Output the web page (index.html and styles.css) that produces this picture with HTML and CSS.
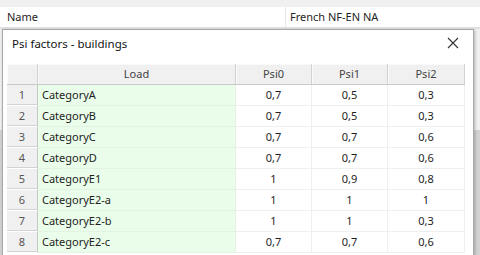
FILE: index.html
```html
<!DOCTYPE html>
<html lang="en">
<head>
    <meta charset="UTF-8">
    <title>Psi factors - buildings</title>
    <link rel="stylesheet" href="styles.css">
</head>
<body>
    <div class="props">
        <div class="props-top"></div>
        <div class="prop-row">
            <div class="prop-name">Name</div>
            <div class="prop-value">French NF-EN NA</div>
        </div>
        <div class="props-gap"></div>
        <div class="props-rest">
            <div class="props-block"></div>
        </div>
    </div>

    <div class="dialog">
        <div class="dialog-title">
            <span>Psi factors - buildings</span>
            <svg class="close-icon" width="12" height="12" viewBox="0 0 12 12">
                <path d="M1 1 L11 11 M11 1 L1 11" stroke="#333" stroke-width="1.1" fill="none"/>
            </svg>
        </div>

        <div class="dialog-body">
            <div class="grid">
                <div class="grid-row head">
                    <div class="cell corner"></div>
                    <div class="cell">Load</div>
                    <div class="cell">Psi0</div>
                    <div class="cell">Psi1</div>
                    <div class="cell">Psi2</div>
                </div>

                <div class="grid-row">
                    <div class="cell num">1</div>
                    <div class="cell load">CategoryA</div>
                    <div class="cell">0,7</div>
                    <div class="cell">0,5</div>
                    <div class="cell">0,3</div>
                </div>
                <div class="grid-row">
                    <div class="cell num">2</div>
                    <div class="cell load">CategoryB</div>
                    <div class="cell">0,7</div>
                    <div class="cell">0,5</div>
                    <div class="cell">0,3</div>
                </div>
                <div class="grid-row">
                    <div class="cell num">3</div>
                    <div class="cell load">CategoryC</div>
                    <div class="cell">0,7</div>
                    <div class="cell">0,7</div>
                    <div class="cell">0,6</div>
                </div>
                <div class="grid-row">
                    <div class="cell num">4</div>
                    <div class="cell load">CategoryD</div>
                    <div class="cell">0,7</div>
                    <div class="cell">0,7</div>
                    <div class="cell">0,6</div>
                </div>
                <div class="grid-row">
                    <div class="cell num">5</div>
                    <div class="cell load">CategoryE1</div>
                    <div class="cell">1</div>
                    <div class="cell">0,9</div>
                    <div class="cell">0,8</div>
                </div>
                <div class="grid-row">
                    <div class="cell num">6</div>
                    <div class="cell load">CategoryE2-a</div>
                    <div class="cell">1</div>
                    <div class="cell">1</div>
                    <div class="cell">1</div>
                </div>
                <div class="grid-row">
                    <div class="cell num">7</div>
                    <div class="cell load">CategoryE2-b</div>
                    <div class="cell">1</div>
                    <div class="cell">1</div>
                    <div class="cell">0,3</div>
                </div>
                <div class="grid-row">
                    <div class="cell num">8</div>
                    <div class="cell load">CategoryE2-c</div>
                    <div class="cell">0,7</div>
                    <div class="cell">0,7</div>
                    <div class="cell">0,6</div>
                </div>
            </div>
        </div>
    </div>
</body>
</html>
```

FILE: styles.css
```css
:root {
    --panel-bg: #f0f0f0;
    --grid-line: #efefef;
    --head-line: #d2d2d2;
    --load-bg: #eafdea;
    --text: #1e1e1e;
}

body {
    margin: 0;
    background-color: var(--panel-bg);
    font-family: "Noto Sans", "Open Sans", sans-serif;
    font-size: 11px;
    color: var(--text);
    height: 255px;
    overflow: hidden;
    position: relative;
}

/* property panel behind the dialog */
.props-top {
    height: 7px;
}

.prop-row {
    display: grid;
    grid-template-columns: 286px 1fr;
    height: 20px;
    line-height: 20px;
    background-color: #fff;
}

.prop-name {
    padding-left: 7px;
    border-right: 1px solid #e6e6e6;
}

.prop-value {
    padding-left: 4px;
}

.props-gap {
    height: 2px;
    background-color: #e2e2e2;
}

.props-rest {
    height: 226px;
    display: flex;
    flex-direction: column;
    justify-content: flex-end;
}

.props-block {
    height: 125px;
    background-color: #d3d3d3;
}

/* dialog */
.dialog {
    position: absolute;
    left: 2px;
    top: 29px;
    width: 472px;
    height: 226px;
    box-sizing: border-box;
    overflow: hidden;
    background-color: #fff;
    border: 1px solid #a9a9a9;
    border-bottom: none;
    box-shadow: 1px 1px 3px rgba(0, 0, 0, 0.25);
}

.dialog-title {
    height: 30px;
    padding: 0 10px 4px 9px;
    box-sizing: border-box;
    display: flex;
    align-items: center;
    justify-content: space-between;
    font-size: 11.5px;
    color: #111;
}

.close-icon {
    margin-right: 4px;
}

.dialog-body {
    padding: 4px 8px 0 4px;
}

.grid-row {
    display: grid;
    grid-template-columns: 31px 198px 76px 76px 77px;
    height: 21px;
}

.cell {
    box-sizing: border-box;
    height: 21px;
    line-height: 20px;
    text-align: center;
    border-right: 1px solid var(--grid-line);
    border-bottom: 1px solid var(--grid-line);
}

.grid-row.head .cell {
    background-color: var(--panel-bg);
    color: #444;
    border-right: 1px solid var(--head-line);
    border-bottom: 1px solid #c9c9c9;
    box-shadow: inset 1px 1px 0 #fafafa;
}

.cell.num {
    background-color: var(--panel-bg);
    color: #555;
    border-right: 1px solid #c8c8c8;
    border-bottom: 1px solid #fff;
    box-shadow: inset 0 -1px 0 #d3d3d3;
}

.cell.load {
    text-align: left;
    padding-left: 4px;
    background-color: var(--load-bg);
    border-right-color: #e4f4e4;
    border-bottom-color: #e2f3e2;
}
```
